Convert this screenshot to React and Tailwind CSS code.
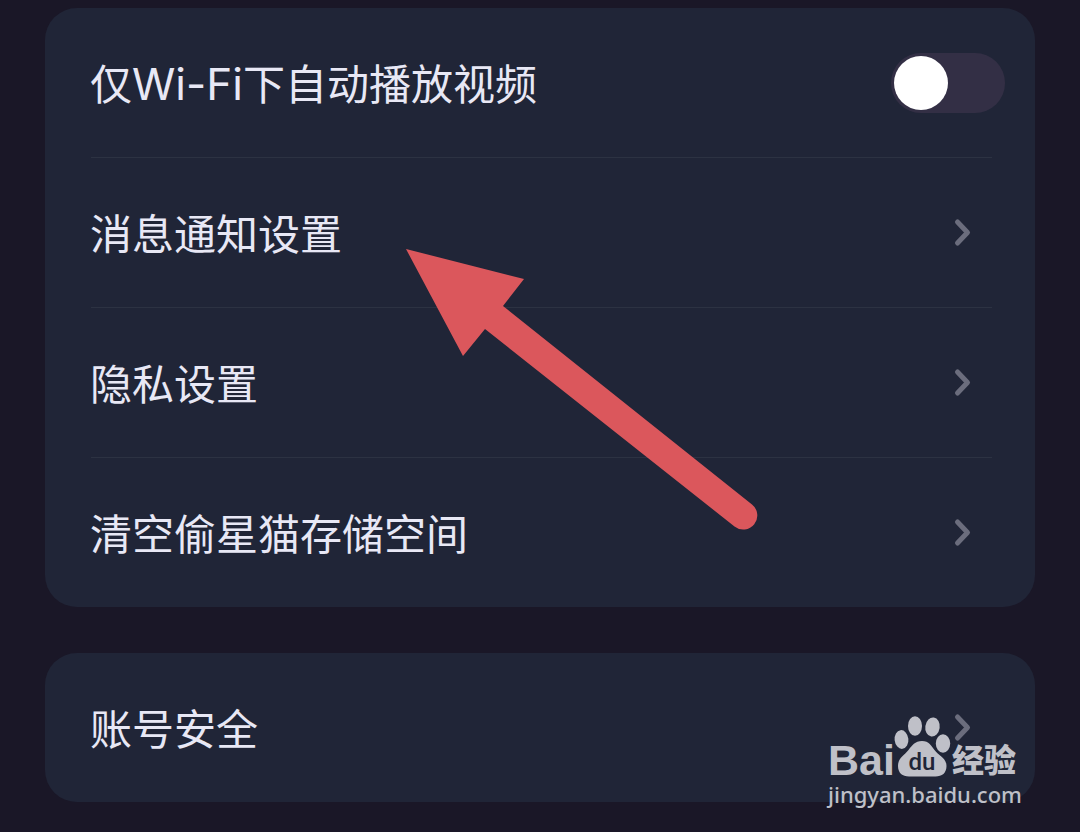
import React, { useState } from 'react';

const ROW = "flex w-full items-center justify-between py-11 pl-[45px] text-left";
const LABEL = "pt-1 text-[42px] leading-[57px]";

function Divider() {
  return <hr className="ml-[46px] mr-[43px] h-px border-0 bg-[#2c3242]" />;
}

function Card({ children }) {
  return <section className="rounded-[32px] bg-[#202537]">{children}</section>;
}

function LinkRow({ title }) {
  return (
    <button type="button" className={`${ROW} pr-16`}>
      <span className={LABEL}>{title}</span>
      <svg className="h-8 w-5" viewBox="0 0 20 32" fill="none" stroke="#6b6d7d" strokeWidth="5" strokeLinecap="round" strokeLinejoin="round" aria-hidden="true">
        <path d="M6.500 5L16.500 15.500L6.500 26" />
      </svg>
    </button>
  );
}

function ToggleRow({ id, title }) {
  const [on, setOn] = useState(false);
  return (
    <div className={`${ROW} pr-[30px]`}>
      <label htmlFor={id} className={LABEL}>{title}</label>
      <input
        id={id}
        type="checkbox"
        checked={on}
        onChange={(e) => setOn(e.target.checked)}
        className="flex h-[60px] w-[114px] appearance-none items-center rounded-full bg-[#332f45] px-[3px] before:size-[54px] before:rounded-full before:bg-white before:content-[''] checked:justify-end checked:bg-[#db575c]"
      />
    </div>
  );
}

function Arrow() {
  return (
    <svg className="pointer-events-none absolute left-[400px] top-[240px] h-[300px] w-[370px]" viewBox="400 240 370 300" fill="#db575c" aria-hidden="true">
      <path d="M406 249L524 279L503 306L752 504.500A14 14 0 0 1 734.500 526.500L485 329L463 356Z" />
    </svg>
  );
}

function Watermark() {
  return (
    <div className="pointer-events-none absolute bottom-[22px] right-[59px] flex w-[193px] flex-col text-[#bfc0c8]">
      <div className="flex items-end">
        <span className="w-16 font-['Liberation_Sans',sans-serif] text-[43px] font-bold leading-9">Bai</span>
        <svg className="h-[62px] w-[60px] shrink-0" viewBox="0 0 60 62" fill="#bfc0c8" aria-hidden="true">
          <ellipse cx="9.500" cy="23.500" rx="6.900" ry="9.400" transform="rotate(-6 9.500 23.500)" />
          <ellipse cx="23" cy="10" rx="7" ry="9.800" />
          <ellipse cx="40.500" cy="11" rx="7.200" ry="9.600" transform="rotate(8 40.500 11)" />
          <ellipse cx="51" cy="27.500" rx="7.200" ry="9.200" />
          <path d="M30 25C37 25 39.500 30 42.500 34C46.500 39.500 54.500 42 54.500 50C54.500 57 50 60.500 43.500 60.500H17C10.500 60.500 6 57 6 50C6 42 12 39.500 16.500 34C20 29.500 23 25 30 25Z" />
          <text x="30" y="54" textAnchor="middle" fill="#202537" fontFamily="Roboto, sans-serif" fontSize="24" fontWeight="500">du</text>
        </svg>
        <span className="font-['Inter','Noto_Sans_CJK_SC',sans-serif] text-[32px] font-black leading-[34px]">经验</span>
      </div>
      <span className="font-['Noto_Sans',sans-serif] text-[22px] font-medium leading-8">jingyan.baidu.com</span>
    </div>
  );
}

export default function App() {
  return (
    <main className="relative min-h-screen bg-[#1a1727] px-[45px] pb-[30px] pt-2 font-['Inter','Noto_Sans_CJK_SC',sans-serif] text-[#e8e8f5] [font-optical-sizing:none]">
      <div className="flex flex-col gap-[46px]">
        <Card>
          <ToggleRow id="autoplay" title={<>仅<span className="text-[44px]">Wi-Fi</span>下自动播放视频</>} />
          <Divider />
          <LinkRow title="消息通知设置" />
          <Divider />
          <LinkRow title="隐私设置" />
          <Divider />
          <LinkRow title="清空偷星猫存储空间" />
        </Card>
        <Card>
          <LinkRow title="账号安全" />
        </Card>
      </div>
      <Arrow />
      <Watermark />
    </main>
  );
}
